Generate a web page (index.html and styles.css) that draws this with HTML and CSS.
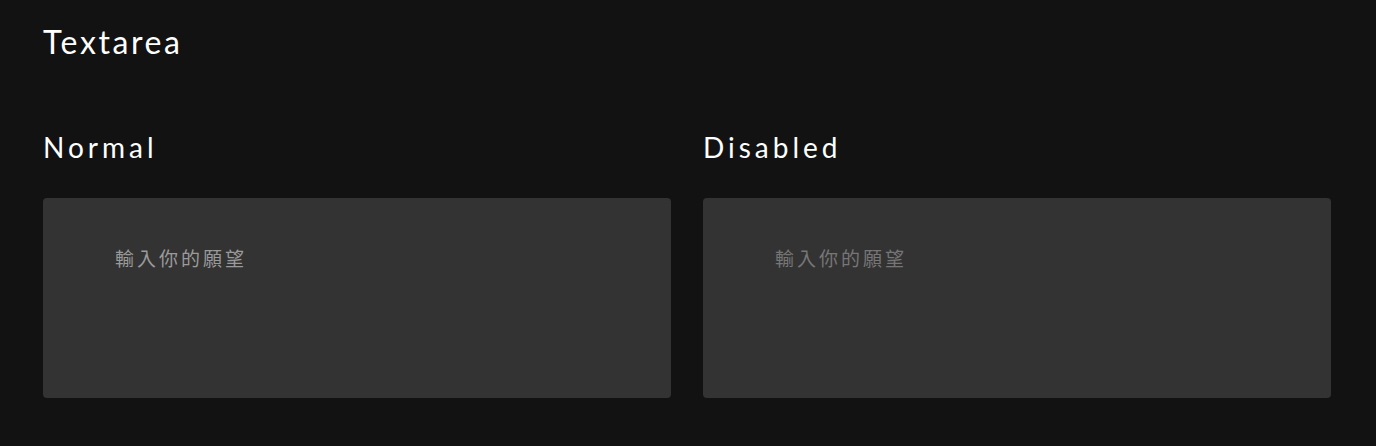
FILE: index.html
```html
<!DOCTYPE html>
<html lang="zh-Hant">
<head>
<meta charset="utf-8">
<link rel="stylesheet" href="styles.css">
</head>
<body>
<main class="page">
  <h1 class="title">Textarea</h1>
  <div class="grid">
    <section class="col">
      <h2 class="label">Normal</h2>
      <textarea class="field" placeholder="輸入你的願望"></textarea>
    </section>
    <section class="col">
      <h2 class="label">Disabled</h2>
      <textarea class="field" placeholder="輸入你的願望" disabled></textarea>
    </section>
  </div>
</main>
</body>
</html>
```
FILE: styles.css
```css
html, body {
  margin: 0;
  padding: 0;
  background: #121212;
}
body {
  font-family: Lato, "Noto Sans CJK TC", sans-serif;
  color: #fff;
}
.page {
  padding: 22px 45px 0 43px;
}
.title {
  margin: 0;
  font-size: 32px;
  font-weight: 400;
  letter-spacing: 2.6px;
  line-height: 40px;
}
.grid {
  display: grid;
  grid-template-columns: 628px 628px;
  column-gap: 32px;
  margin-top: 67px;
}
.label {
  margin: 0;
  font-size: 28px;
  font-weight: 400;
  letter-spacing: 4px;
  line-height: 36px;
}
.field {
  display: block;
  box-sizing: border-box;
  margin-top: 33px;
  width: 628px;
  height: 200px;
  padding: 47px 72px;
  border: none;
  border-radius: 4px;
  background: #333333;
  resize: none;
  outline: none;
  font-family: Lato, "Noto Sans CJK TC", sans-serif;
  font-size: 19px;
  letter-spacing: 3px;
  line-height: 28px;
  color: #fff;
}
.field::placeholder {
  color: #9a9a9a;
  opacity: 1;
}
.field:disabled::placeholder {
  color: #767676;
}
```
